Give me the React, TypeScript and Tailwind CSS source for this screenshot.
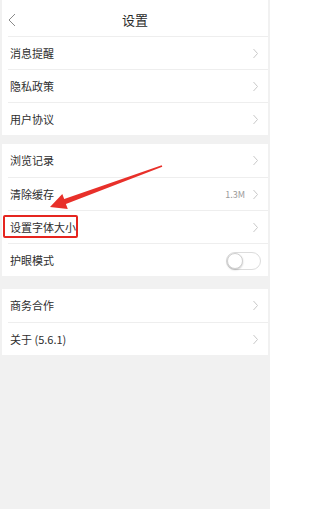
import React from "react";

const font = { fontFamily: '"Noto Sans CJK SC", "Noto Sans", sans-serif' };

function Chevron() {
  return (
    <svg width="7" height="11" viewBox="0 0 7 11" className="shrink-0">
      <polyline points="1.5,1 5.5,5.5 1.5,10" fill="none" stroke="#c9c9c9" strokeWidth="1" />
    </svg>
  );
}

function Row({ label, right, first }: { label: string; right?: React.ReactNode; first?: boolean }) {
  return (
    <div className="h-[33px] pl-[6px] flex">
      <div
        className={
          "flex-1 flex items-center justify-between pr-[9px] " +
          (first ? "" : "border-t border-[#eeeeee]")
        }
      >
        <span className="text-[11px] text-[#2e2e2e] leading-none pl-[2px]">{label}</span>
        {right ?? <Chevron />}
      </div>
    </div>
  );
}

export default function App() {
  return (
    <div className="relative w-[270px] h-[509px] bg-[#f1f1f1] px-[2px] overflow-hidden" style={font}>
      <div className="bg-white">
        <div className="h-[36px] relative flex items-center justify-center">
          <svg width="8" height="14" viewBox="0 0 8 14" className="absolute left-[6px] top-[13px]">
            <polyline points="7,1 1,7 7,13" fill="none" stroke="#8a8a8a" strokeWidth="1" />
          </svg>
          <span className="text-[13px] text-[#2a2a2a] leading-none mt-[3px]">设置</span>
        </div>
        <Row label="消息提醒" />
        <Row label="隐私政策" />
        <Row label="用户协议" />
      </div>
      <div className="h-[9px]" />
      <div className="bg-white">
        <Row label="浏览记录" first />
        <Row
          label="清除缓存"
          right={
            <div className="flex items-center gap-[7px]">
              <span className="text-[9px] text-[#9a9a9a] leading-none">1.3M</span>
              <Chevron />
            </div>
          }
        />
        <div className="relative">
          <Row label="设置字体大小" />
          <div className="absolute left-[1px] top-[5px] w-[75px] h-[23px] border-2 border-[#e5251f] rounded-[2px]" />
        </div>
        <Row
          label="护眼模式"
          right={
            <div className="w-[35px] h-[18px] rounded-full border border-[#dcdcdc] bg-white relative -mr-[2px] mt-[2px]">
              <div className="absolute left-0 top-0 w-[16px] h-[16px] rounded-full bg-white border border-[#d0d0d0] shadow-[0_1px_2px_rgba(0,0,0,0.2)]" />
            </div>
          }
        />
      </div>
      <div className="h-[13px]" />
      <div className="bg-white">
        <Row label="商务合作" first />
        <Row label="关于 (5.6.1)" />
      </div>
      <svg width="270" height="509" viewBox="0 0 270 509" className="absolute left-0 top-0 pointer-events-none">
        <polygon
          points="50,207 67.8,209 65.9,203.9 162.3,166.8 161.7,165.2 64.2,199.1 62.3,194"
          fill="#e8302a"
        />
      </svg>
    </div>
  );
}
